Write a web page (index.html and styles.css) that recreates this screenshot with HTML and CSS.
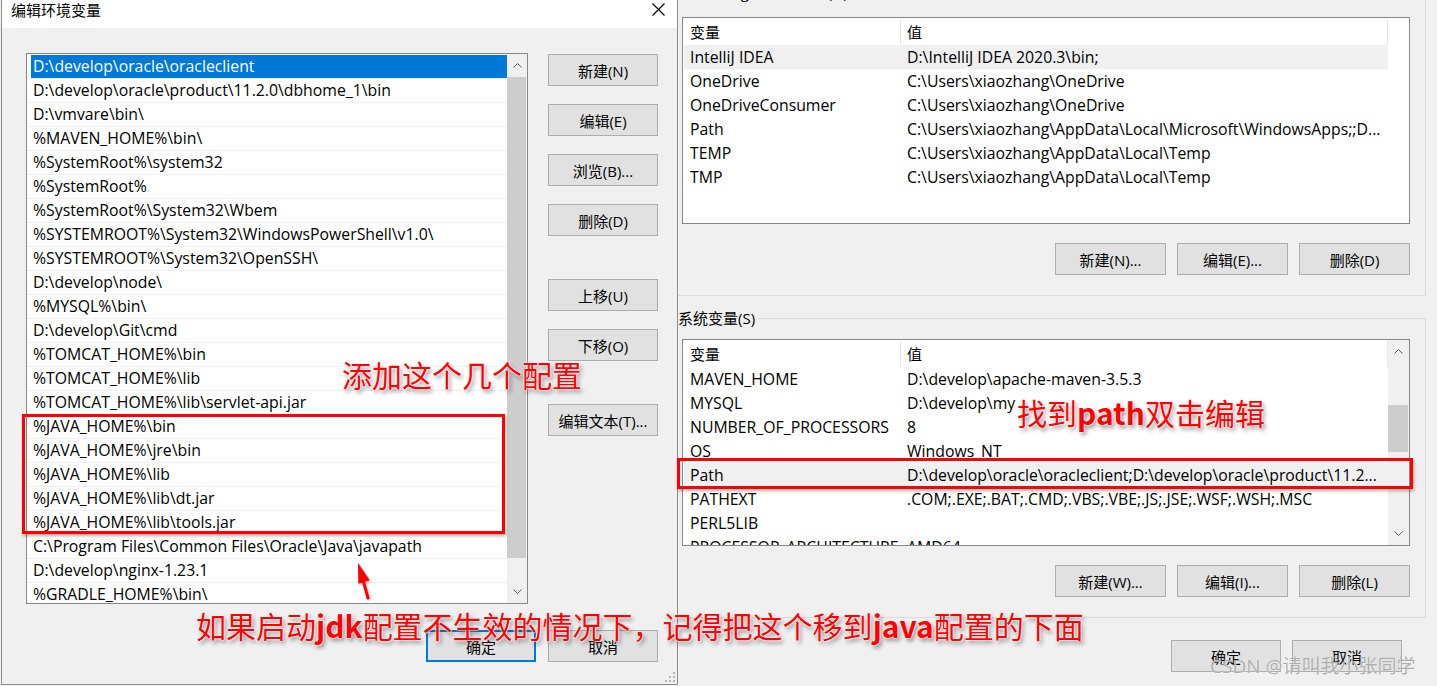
FILE: index.html
```
<!DOCTYPE html>
<html lang="zh-CN">
<head>
  <meta charset="UTF-8">
  <title>编辑环境变量</title>
  <link rel="stylesheet" href="styles.css">
</head>
<body>
  <div class="screen">
    <div class="dialog">
      <div class="titlebar">
        <span class="title">编辑环境变量</span>
        <svg class="close" width="13" height="13" viewBox="0 0 13 13"><path d="M0.5 0.5 L12.5 12.5 M12.5 0.5 L0.5 12.5" stroke="#000" stroke-width="1.1" fill="none"/></svg>
      </div>
      <div class="dlg-body">
        <div class="listbox">
          <div class="rows">
            <div class="row sel">D:\develop\oracle\oracleclient</div>
            <div class="row">D:\develop\oracle\product\11.2.0\dbhome_1\bin</div>
            <div class="row">D:\vmvare\bin\</div>
            <div class="row">%MAVEN_HOME%\bin\</div>
            <div class="row">%SystemRoot%\system32</div>
            <div class="row">%SystemRoot%</div>
            <div class="row">%SystemRoot%\System32\Wbem</div>
            <div class="row">%SYSTEMROOT%\System32\WindowsPowerShell\v1.0\</div>
            <div class="row">%SYSTEMROOT%\System32\OpenSSH\</div>
            <div class="row">D:\develop\node\</div>
            <div class="row">%MYSQL%\bin\</div>
            <div class="row">D:\develop\Git\cmd</div>
            <div class="row">%TOMCAT_HOME%\bin</div>
            <div class="row">%TOMCAT_HOME%\lib</div>
            <div class="row">%TOMCAT_HOME%\lib\servlet-api.jar</div>
            <div class="row">%JAVA_HOME%\bin</div>
            <div class="row">%JAVA_HOME%\jre\bin</div>
            <div class="row">%JAVA_HOME%\lib</div>
            <div class="row">%JAVA_HOME%\lib\dt.jar</div>
            <div class="row">%JAVA_HOME%\lib\tools.jar</div>
            <div class="row">C:\Program Files\Common Files\Oracle\Java\javapath</div>
            <div class="row">D:\develop\nginx-1.23.1</div>
            <div class="row">%GRADLE_HOME%\bin\</div>
          </div>
          <div class="vscroll">
            <div class="sb-btn"><svg width="9" height="5" viewBox="0 0 9 5"><polyline points="0.5,4.5 4.5,0.5 8.5,4.5" fill="none" stroke="#606060"/></svg></div>
            <div class="list-thumb"></div>
            <div class="sb-track"></div>
            <div class="sb-btn"><svg width="9" height="5" viewBox="0 0 9 5"><polyline points="0.5,0.5 4.5,4.5 8.5,0.5" fill="none" stroke="#606060"/></svg></div>
          </div>
        </div>
        <div class="side-btns">
          <button class="btn">新建(N)</button>
          <button class="btn">编辑(E)</button>
          <button class="btn">浏览(B)...</button>
          <button class="btn">删除(D)</button>
          <button class="btn spaced">上移(U)</button>
          <button class="btn">下移(O)</button>
          <button class="btn spaced">编辑文本(T)...</button>
        </div>
      </div>
      <div class="dlg-foot">
        <button class="btn default">确定</button>
        <button class="btn">取消</button>
      </div>
      <svg class="grip" width="10" height="10" viewBox="0 0 10 10" fill="#b5b5b5"><rect x="8" y="0" width="2" height="2"/><rect x="4" y="4" width="2" height="2"/><rect x="8" y="4" width="2" height="2"/><rect x="0" y="8" width="2" height="2"/><rect x="4" y="8" width="2" height="2"/><rect x="8" y="8" width="2" height="2"/></svg>
    </div>

    <div class="envwin">
      <fieldset class="group user">
        <legend>xiaozhang 的用户变量(U)</legend>
        <div class="tbl">
          <div class="tbl-cols">
            <div class="tbl-head"><div class="th c1">变量</div><div class="th c2">值</div></div>
            <div class="tr hl"><div class="td c1">IntelliJ IDEA</div><div class="td c2">D:\IntelliJ IDEA 2020.3\bin;</div></div>
            <div class="tr"><div class="td c1">OneDrive</div><div class="td c2">C:\Users\xiaozhang\OneDrive</div></div>
            <div class="tr"><div class="td c1">OneDriveConsumer</div><div class="td c2">C:\Users\xiaozhang\OneDrive</div></div>
            <div class="tr"><div class="td c1">Path</div><div class="td c2">C:\Users\xiaozhang\AppData\Local\Microsoft\WindowsApps;;D...</div></div>
            <div class="tr"><div class="td c1">TEMP</div><div class="td c2">C:\Users\xiaozhang\AppData\Local\Temp</div></div>
            <div class="tr"><div class="td c1">TMP</div><div class="td c2">C:\Users\xiaozhang\AppData\Local\Temp</div></div>
          </div>
          <div class="tbl-side"></div>
        </div>
        <div class="grp-btns">
          <button class="btn">新建(N)...</button>
          <button class="btn">编辑(E)...</button>
          <button class="btn">删除(D)</button>
        </div>
      </fieldset>

      <fieldset class="group sys">
        <legend>系统变量(S)</legend>
        <div class="tbl">
          <div class="tbl-cols">
            <div class="tbl-head"><div class="th c1">变量</div><div class="th c2">值</div></div>
            <div class="tr"><div class="td c1">MAVEN_HOME</div><div class="td c2">D:\develop\apache-maven-3.5.3</div></div>
            <div class="tr"><div class="td c1">MYSQL</div><div class="td c2">D:\develop\my</div></div>
            <div class="tr"><div class="td c1">NUMBER_OF_PROCESSORS</div><div class="td c2">8</div></div>
            <div class="tr"><div class="td c1">OS</div><div class="td c2">Windows_NT</div></div>
            <div class="tr hl"><div class="td c1">Path</div><div class="td c2">D:\develop\oracle\oracleclient;D:\develop\oracle\product\11.2...</div></div>
            <div class="tr"><div class="td c1">PATHEXT</div><div class="td c2">.COM;.EXE;.BAT;.CMD;.VBS;.VBE;.JS;.JSE;.WSF;.WSH;.MSC</div></div>
            <div class="tr"><div class="td c1">PERL5LIB</div><div class="td c2"></div></div>
            <div class="tr"><div class="td c1">PROCESSOR_ARCHITECTURE</div><div class="td c2">AMD64</div></div>
          </div>
          <div class="tbl-side vscroll">
            <div class="sb-btn"><svg width="9" height="5" viewBox="0 0 9 5"><polyline points="0.5,4.5 4.5,0.5 8.5,4.5" fill="none" stroke="#606060"/></svg></div>
            <div class="sys-thumb"></div>
            <div class="sb-track"></div>
            <div class="sb-btn"><svg width="9" height="5" viewBox="0 0 9 5"><polyline points="0.5,0.5 4.5,4.5 8.5,0.5" fill="none" stroke="#606060"/></svg></div>
          </div>
        </div>
        <div class="grp-btns">
          <button class="btn">新建(W)...</button>
          <button class="btn">编辑(I)...</button>
          <button class="btn">删除(L)</button>
        </div>
      </fieldset>

      <div class="env-foot">
        <button class="btn">确定</button>
        <button class="btn">取消</button>
      </div>
    </div>

    <!-- annotations drawn over the screenshot -->
    <div class="mark box-left"></div>
    <div class="mark box-right"></div>
    <div class="note note-add">添加这个几个配置</div>
    <div class="note note-path">找到<b>path</b>双击编辑</div>
    <div class="note note-bottom">如果启动<b>jdk</b>配置不生效的情况下，记得把这个移到<b>java</b>配置的下面</div>
    <svg class="arrow" width="30" height="46" viewBox="0 0 30 46">
      <line x1="15" y1="24" x2="20" y2="42" stroke="#f00" stroke-width="3" stroke-linecap="round"/>
      <polygon points="10,7 21.7,24.3 10.3,27.7" fill="#f00"/>
    </svg>
    <div class="watermark">CSDN @请叫我小张同学</div>
  </div>
</body>
</html>
```

FILE: styles.css
```
/* Reset */
* {
  box-sizing: border-box;
  margin: 0;
  padding: 0;
}

body {
  width: 1437px;
  height: 686px;
  overflow: hidden;
  background-color: #f0f0f0;
  font-family: "Open Sans", "Noto Sans CJK SC", sans-serif;
  font-size: 15px;
  color: #000;
}

.screen {
  position: relative;
  display: flex;
  height: 686px;
}

/* Edit dialog */
.dialog {
  position: relative;
  margin-left: 1px;
  width: 677px;
  height: 685px;
  background-color: #f0f0f0;
  border: 1px solid #8c8c8c;
  border-top: none;
  display: flex;
  flex-direction: column;
  flex-shrink: 0;
}

.titlebar {
  height: 28px;
  background-color: #fff;
  display: flex;
  align-items: flex-start;
  justify-content: space-between;
  padding: 0 12px 0 9px;
}

.title {
  line-height: 20px;
}

.close {
  margin-top: 3px;
}

.dlg-body {
  display: flex;
  gap: 20px;
  padding: 25px 0 0 24px;
}

.listbox {
  width: 502px;
  height: 551px;
  border: 1px solid #828790;
  background-color: #fff;
  display: flex;
}

.rows {
  flex: 1;
  padding-top: 1px;
  overflow: hidden;
}

.row {
  height: 24px;
  line-height: 23px;
  border-bottom: 1px solid #f0f0f0;
  padding-left: 6px;
  font-size: 15.8px;
  white-space: nowrap;
}

.row.sel {
  background-color: #0078d7;
  color: #fff;
  border-left: 4px solid #fff;
  padding-left: 2px;
}

.vscroll {
  width: 20px;
  display: flex;
  flex-direction: column;
  background-color: #f0f0f0;
}

.sb-btn {
  height: 23px;
  display: flex;
  align-items: center;
  justify-content: center;
  flex-shrink: 0;
}

.sb-track {
  flex: 1;
}

.list-thumb {
  height: 481px;
  margin-right: 1px;
  background-color: #cdcdcd;
}

.side-btns {
  display: flex;
  flex-direction: column;
  gap: 18px;
  padding-top: 1px;
}

.btn {
  width: 110px;
  height: 32px;
  background-color: #e1e1e1;
  border: 1px solid #adadad;
  font-family: inherit;
  font-size: 15px;
  color: #000;
}

.btn.spaced {
  margin-top: 25px;
}

.btn.default {
  border: 2px solid #0078d7;
}

.dlg-foot {
  margin-top: 26px;
  display: flex;
  justify-content: flex-end;
  gap: 12px;
  padding-right: 19px;
}

.grip {
  position: absolute;
  right: 2px;
  bottom: 2px;
}

/* Environment variables window behind */
.envwin {
  flex: 1;
  display: flex;
  flex-direction: column;
}

.group {
  width: 748px;
  border: 1px solid #dcdcdc;
  border-left: none;
  padding: 11px 15px 20px 4px;
}

.group legend {
  line-height: 20px;
  padding-right: 3px;
  margin-left: -4px;
}

.group.user {
  margin-top: -18px;
  padding-top: 15px;
}

.group.sys {
  margin-top: 12px;
}

.tbl {
  width: 728px;
  height: 207px;
  border: 1px solid #828790;
  background-color: #fff;
  display: flex;
}

.tbl-cols {
  width: 705px;
  padding: 1px 0 0 1px;
  overflow: hidden;
}

.tbl-side {
  width: 21px;
}

.tbl-head {
  display: flex;
  height: 26px;
}

.th {
  line-height: 26px;
}

.c1 {
  width: 216px;
  padding-left: 6px;
  white-space: nowrap;
  overflow: hidden;
}

.c2 {
  width: 488px;
  padding-left: 7px;
  white-space: nowrap;
  overflow: hidden;
}

.th.c2 {
  padding-left: 6px;
  border-left: 1px solid #e5e5e5;
  border-right: 1px solid #e5e5e5;
}

.tr {
  display: flex;
  height: 24px;
  line-height: 24px;
  font-size: 15.8px;
}

.tr.hl {
  background-color: #f0f0f0;
}

.sys-thumb {
  height: 47px;
  margin-top: 42px;
  margin-right: 1px;
  background-color: #cdcdcd;
}

.grp-btns {
  display: flex;
  justify-content: flex-end;
  gap: 11px;
  margin-top: 19px;
}

.grp-btns .btn {
  width: 111px;
}

.env-foot {
  margin-top: 22px;
  display: flex;
  justify-content: flex-end;
  gap: 11px;
  padding-right: 35px;
}

/* Red annotations */
.mark {
  position: absolute;
  border: 3px solid #f00;
  box-shadow: 1px 2px 3px rgba(0, 0, 0, 0.3);
}

.box-left {
  left: 22px;
  top: 414px;
  width: 483px;
  height: 120px;
}

.box-right {
  left: 677px;
  top: 458px;
  width: 736px;
  height: 31px;
}

.note {
  position: absolute;
  font-family: "Noto Sans CJK SC", sans-serif;
  font-size: 30px;
  line-height: 30px;
  color: #f00;
  white-space: nowrap;
  text-shadow: 0 0 2px #fff, 0 0 2px #fff, 0 0 1px #fff, 2px 3px 4px rgba(0, 0, 0, 0.45);
}

.note b {
  font-weight: bold;
}

.note-add {
  left: 342px;
  top: 359px;
}

.note-path {
  left: 1017px;
  top: 397px;
}

.note-bottom {
  left: 196px;
  top: 610px;
}

.arrow {
  position: absolute;
  left: 348px;
  top: 556px;
  filter: drop-shadow(1px 1px 1px rgba(0, 0, 0, 0.3));
}

.watermark {
  position: absolute;
  left: 1210px;
  top: 655px;
  font-size: 19px;
  line-height: 22px;
  color: rgba(160, 160, 160, 0.85);
  text-shadow: 0 0 1px #fff;
  white-space: nowrap;
}
```
